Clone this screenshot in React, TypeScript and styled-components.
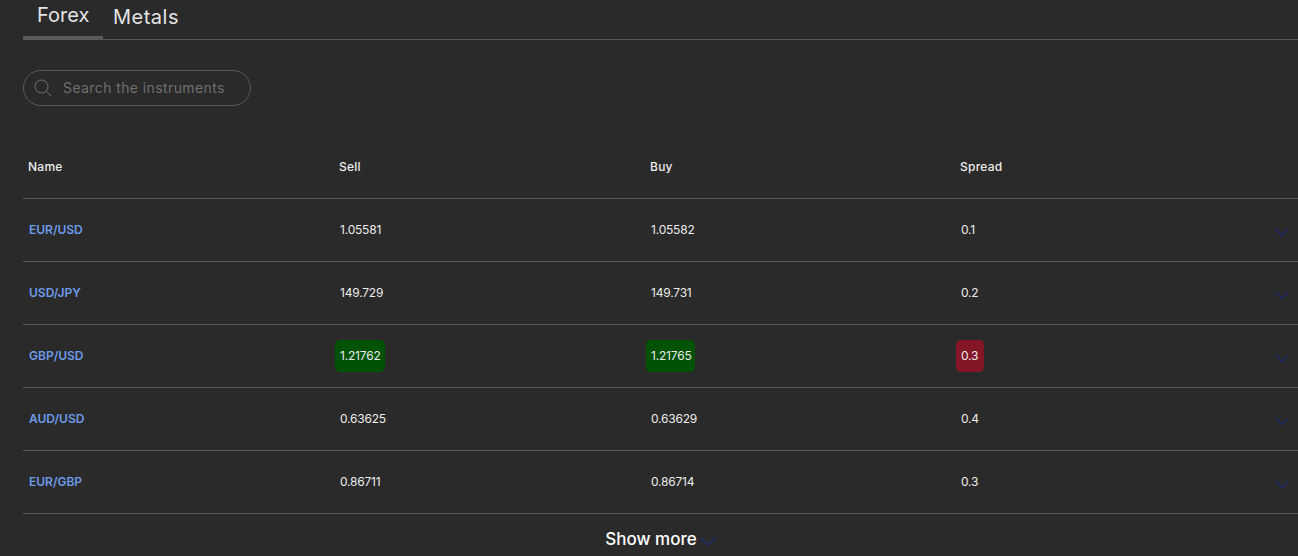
import styled, { createGlobalStyle } from "styled-components";

const GlobalStyle = createGlobalStyle`
  html, body {
    margin: 0;
    height: 100%;
    background: #2a2a2a;
    font-family: "Inter", "Liberation Sans", sans-serif;
    overflow: hidden;
  }
`;

type Row = {
  name: string;
  sell: string;
  buy: string;
  spread: string;
  flash?: boolean;
};

const rows: Row[] = [
  { name: "EUR/USD", sell: "1.05581", buy: "1.05582", spread: "0.1" },
  { name: "USD/JPY", sell: "149.729", buy: "149.731", spread: "0.2" },
  { name: "GBP/USD", sell: "1.21762", buy: "1.21765", spread: "0.3", flash: true },
  { name: "AUD/USD", sell: "0.63625", buy: "0.63629", spread: "0.4" },
  { name: "EUR/GBP", sell: "0.86711", buy: "0.86714", spread: "0.3" },
];

const Chevron = ({ size }: { size: number }) => (
  <svg width={size} height={size} viewBox="0 0 16 16" fill="none">
    <path d="M1.5 5 L8 11.5 L14.5 5" stroke="#1f2d6b" strokeWidth="1.4" />
  </svg>
);

const SearchIcon = () => (
  <svg width="18" height="18" viewBox="0 0 18 18" fill="none">
    <circle cx="7.5" cy="7.5" r="6.5" stroke="#6f6f6f" strokeWidth="1" />
    <path d="M12.4 12.4 L17 17" stroke="#6f6f6f" strokeWidth="1" />
  </svg>
);

const App = () => {
  return (
    <Page>
      <GlobalStyle />
      <Tabs>
        <Tab $active>Forex</Tab>
        <Tab>Metals</Tab>
      </Tabs>
      <SearchBox>
        <SearchIcon />
        <SearchInput placeholder="Search the instruments" />
      </SearchBox>
      <HeadRow>
        <HeadCell>Name</HeadCell>
        <HeadCell>Sell</HeadCell>
        <HeadCell>Buy</HeadCell>
        <HeadCell>Spread</HeadCell>
      </HeadRow>
      {rows.map((row) => (
        <DataRow key={row.name}>
          <NameCell>{row.name}</NameCell>
          <Cell>
            <Value $tone={row.flash ? "up" : undefined}>{row.sell}</Value>
          </Cell>
          <Cell>
            <Value $tone={row.flash ? "up" : undefined}>{row.buy}</Value>
          </Cell>
          <Cell>
            <Value $tone={row.flash ? "down" : undefined}>{row.spread}</Value>
          </Cell>
          <ArrowCell>
            <Chevron size={16} />
          </ArrowCell>
        </DataRow>
      ))}
      <ShowMore>
        Show more
        <ShowMoreIcon>
          <Chevron size={18} />
        </ShowMoreIcon>
      </ShowMore>
    </Page>
  );
};

export default App;

const Page = styled.div`
  padding-left: 23px;
  color: #f2f2f2;
`;

const Tabs = styled.div`
  display: flex;
  height: 39px;
  border-bottom: 1px solid #5a5a5a;
`;

const Tab = styled.div<{ $active?: boolean }>`
  box-sizing: border-box;
  height: ${(p) => (p.$active ? "40px" : "39px")};
  width: ${(p) => (p.$active ? "80px" : "auto")};
  padding: ${(p) => (p.$active ? "3px 0 0 14px" : "5px 0 0 10px")};
  font-size: 20px;
  line-height: 24px;
  letter-spacing: ${(p) => (p.$active ? "0" : "0.5px")};
  color: #e4e4e4;
  border-bottom: ${(p) => (p.$active ? "4px solid #5a5a5a" : "none")};
`;

const SearchBox = styled.label`
  box-sizing: border-box;
  display: flex;
  align-items: center;
  gap: 11px;
  width: 228px;
  height: 36px;
  margin-top: 30px;
  padding-left: 10px;
  border: 1px solid #5a5a5a;
  border-radius: 18px;
`;

const SearchInput = styled.input`
  width: 180px;
  height: 20px;
  padding: 0 0 2px;
  border: none;
  outline: none;
  background: transparent;
  font-family: inherit;
  font-size: 14px;
  letter-spacing: 0.4px;
  color: #e4e4e4;

  &::placeholder {
    color: #6f6f6f;
    opacity: 1;
  }
`;

const columns = `311px 311px 310px 1fr 32px`;

const HeadRow = styled.div`
  display: grid;
  grid-template-columns: ${columns};
  align-items: center;
  height: 92px;
  border-bottom: 1px solid #5a5a5a;
`;

const HeadCell = styled.div`
  padding: 0 0 0 5px;
  margin-top: 28px;
  font-size: 12px;
  font-weight: 500;
  letter-spacing: 0.25px;
  color: #ececec;
`;

const DataRow = styled.div`
  display: grid;
  grid-template-columns: ${columns};
  align-items: center;
  height: 62px;
  border-bottom: 1px solid #5a5a5a;
`;

const Cell = styled.div`
  display: flex;
  align-items: center;
  padding-left: 1px;
`;

const NameCell = styled.div`
  padding: 0 0 2px 6px;
  font-size: 12px;
  font-weight: 600;
  color: #6d9ceb;
`;

const Value = styled.span<{ $tone?: "up" | "down" }>`
  box-sizing: border-box;
  display: inline-flex;
  align-items: center;
  height: 32px;
  padding: 0 ${(p) => (p.$tone === "down" ? "6px" : "4px")} 2px 5px;
  border-radius: 5px;
  font-size: 12px;
  letter-spacing: -0.2px;
  color: #ececec;
  background: ${(p) =>
    p.$tone === "up" ? "#005205" : p.$tone === "down" ? "#841627" : "transparent"};
`;

const ArrowCell = styled.div`
  display: flex;
  padding-top: 4px;
  padding-left: 8px;
`;

const ShowMore = styled.div`
  box-sizing: border-box;
  display: flex;
  justify-content: center;
  align-items: center;
  height: 50px;
  padding-left: 1px;
  font-size: 17px;
  font-weight: 500;
  color: #ffffff;
`;

const ShowMoreIcon = styled.span`
  display: flex;
  margin-left: 2px;
  padding-top: 4px;
`;
